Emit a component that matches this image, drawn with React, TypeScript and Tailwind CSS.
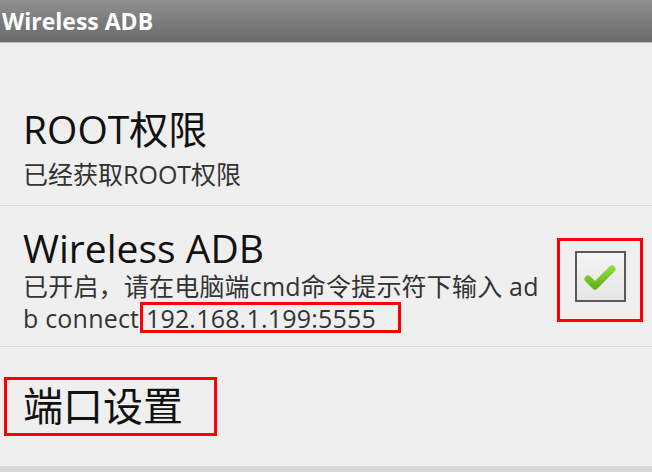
import React from "react";

const sans = "font-['Open_Sans','Noto_Sans_CJK_SC',sans-serif]";

function CheckBox() {
  return (
    <div className="w-[51px] h-[51px] border-2 border-[#5a5a5a] bg-gradient-to-b from-[#f4f4f4] to-[#e6e6e6] flex items-center justify-center">
      <svg width="47" height="47" viewBox="0 0 47 47">
        <defs>
          <linearGradient id="g" x1="0" y1="0" x2="0" y2="1">
            <stop offset="0" stopColor="#8ed83a" />
            <stop offset="1" stopColor="#63b51c" />
          </linearGradient>
        </defs>
        <path d="M11 26 L18 33 L35 16" fill="none" stroke="url(#g)" strokeWidth="7" strokeLinecap="round" strokeLinejoin="round" />
      </svg>
    </div>
  );
}

export default function App() {
  return (
    <div className={`w-[652px] h-[472px] bg-[#efefef] flex flex-col overflow-hidden ${sans}`}>
      <div className="h-[42px] bg-gradient-to-b from-[#8f8f8f] to-[#6b6b6b] flex items-center pl-[2px] shrink-0">
        <span className="text-white text-[23px] font-bold leading-none">Wireless ADB</span>
      </div>
      <div className="h-px bg-[#bdbdbd] shrink-0" />

      <div className="h-[162px] pl-[23px] pt-[66px] shrink-0 text-[#111]">
        <div className="text-[39px] leading-[39px]">ROOT权限</div>
        <div className="mt-[14px] text-[25px] leading-[25px] text-[#333]">已经获取ROOT权限</div>
      </div>
      <div className="h-px bg-[#d6d6d6] shrink-0" />

      <div className="h-[140px] pl-[23px] pr-[10px] flex items-center shrink-0 relative">
        <div className="flex-1 pt-[10px]">
          <div className="text-[39px] leading-[39px] text-[#111]">Wireless ADB</div>
          <div className="mt-[3px] text-[25px] leading-[32px] text-[#333] tracking-[0.2px]">
            <div className="whitespace-nowrap">已开启，请在电脑端cmd命令提示符下输入 ad</div>
            <div className="whitespace-nowrap">
              b connect <span className="relative">192.168.1.199:5555
                <span className="absolute left-[-6px] top-[1px] w-[261px] h-[31px] border-[3px] border-[#ff0000]" />
              </span>
            </div>
          </div>
        </div>
        <div className="w-[84px] flex justify-center relative">
          <CheckBox />
          <div className="absolute left-[-1px] top-[-13px] w-[86px] h-[84px] border-[3px] border-[#ff0000]" />
        </div>
      </div>
      <div className="h-px bg-[#d6d6d6] shrink-0" />

      <div className="flex-1 pl-[23px] flex items-center relative">
        <div className="relative text-[40px] leading-[40px] text-[#111] mt-[-2px]">
          端口设置
          <span className="absolute left-[-19px] top-[-9px] w-[213px] h-[59px] border-[3px] border-[#ff0000]" />
        </div>
      </div>
      <div className="h-[6px] bg-[#d8d8d8] shrink-0" />
    </div>
  );
}
